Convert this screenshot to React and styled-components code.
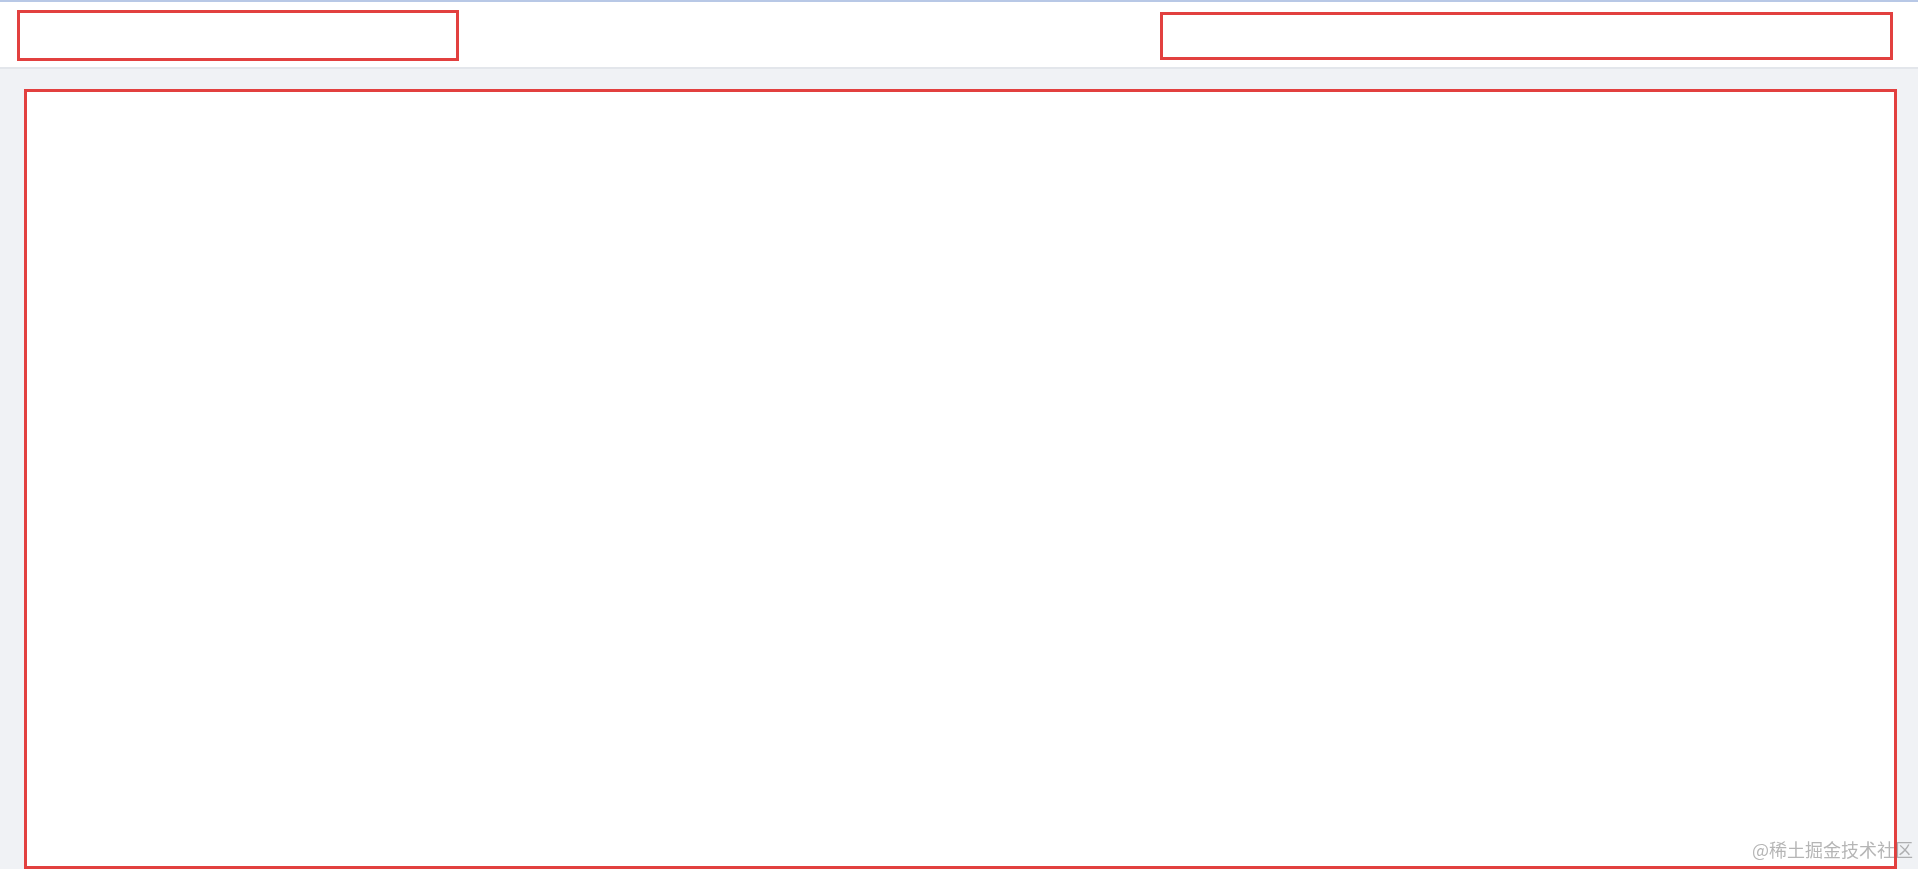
import React from "react";
import styled, { createGlobalStyle } from "styled-components";

const GlobalStyle = createGlobalStyle`
  html, body {
    margin: 0;
    padding: 0;
    height: 100%;
    overflow: hidden;
    background: #f0f2f5;
    font-family: "Noto Sans", "Noto Sans CJK SC", sans-serif;
  }
`;

const Page = styled.div`
  display: flex;
  flex-direction: column;
  height: 100vh;
  border-top: 2px solid #b8c8e6;
  box-sizing: border-box;
`;

const Header = styled.header`
  display: flex;
  align-items: center;
  justify-content: space-between;
  height: 67px;
  padding: 2px 25px 0 17px;
  box-sizing: border-box;
  background: #ffffff;
  border-bottom: 2px solid #e3e6eb;
  flex-shrink: 0;
`;

// red outline placeholders used throughout the wireframe
const Slot = styled.div`
  box-sizing: border-box;
  width: ${(p) => p.$w}px;
  height: ${(p) => p.$h}px;
  border: 3px solid #e2403f;
  background: #ffffff;
`;

const Content = styled.main`
  flex: 1;
  display: flex;
  padding: 20px 21px 0 24px;
  min-height: 0;
`;

const MainSlot = styled(Slot)`
  width: auto;
  flex: 1;
  height: 780px;
`;

const Watermark = styled.div`
  position: fixed;
  right: 5px;
  bottom: 11px;
  font-family: "Noto Sans CJK SC", "Noto Sans", sans-serif;
  font-size: 18px;
  line-height: 1;
  color: rgba(120, 120, 120, 0.55);
  pointer-events: none;
`;

export default function App() {
  return (
    <>
      <GlobalStyle />
      <Page>
        <Header>
          <Slot $w={442} $h={51} />
          <Slot $w={733} $h={48} />
        </Header>
        <Content>
          <MainSlot />
        </Content>
      </Page>
      <Watermark>@稀土掘金技术社区</Watermark>
    </>
  );
}
